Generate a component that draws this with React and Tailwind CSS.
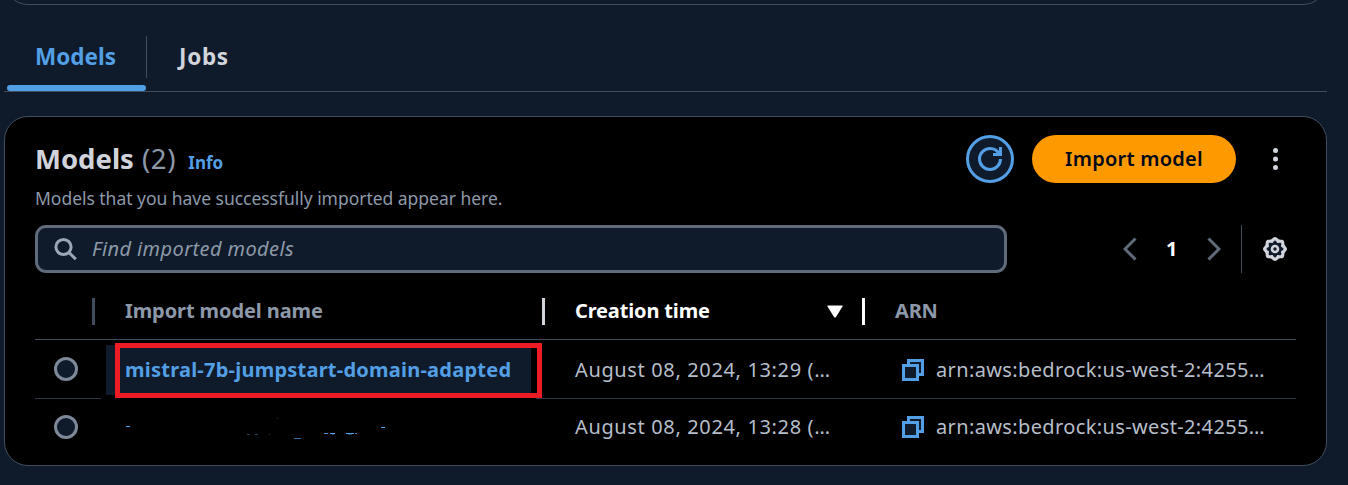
const CopyIcon = () => (
  <svg width="22" height="22" viewBox="0 0 22 22" fill="none" stroke="#539fe5" strokeWidth="3" className="shrink-0">
    <path d="M6.5 5V1.5H20.5V15.5H17" fill="#0f1b2a" />
    <rect x="1.5" y="6.5" width="14" height="14" fill="#0f1b2a" />
  </svg>
);

const Radio = () => (
  <div className="h-6 w-6 shrink-0 rounded-full border-[3px] border-[#7d8998] bg-[#0f1b2a]" />
);

const DateCell = ({ children }) => (
  <div className="w-[319px] shrink-0 pl-[32px] text-[20px] tracking-[0.64px] whitespace-nowrap">{children}</div>
);

const ArnCell = () => (
  <div className="flex items-center gap-[12px] pl-[40px] whitespace-nowrap">
    <CopyIcon />
    <span className="text-[20px] tracking-[0.37px]">arn:aws:bedrock:us-west-2:4255…</span>
  </div>
);

const lobedRing = (radius, depth) =>
  Array.from({ length: 96 }, (_, i) => {
    const a = (i / 96) * Math.PI * 2;
    const r = radius + depth * Math.cos(8 * a);
    return `${(12 + r * Math.cos(a)).toFixed(2)},${(12 + r * Math.sin(a)).toFixed(2)}`;
  }).join(" ");

const maskedNameMarks = [
  [1, 12, 4, 1],
  [122, 20, 3, 0.4],
  [130, 20, 3, 0.4],
  [144, 20, 1, 0.4],
  [152, 4, 1, 0.3],
  [169, 24, 7, 0.7],
  [199, 19, 4, 0.9],
  [205, 19, 5, 1],
  [207, 20, 2, 0.4],
  [221, 19, 8, 1],
  [223, 20, 4, 0.4],
  [230, 19, 2, 0.8],
  [256, 13, 4, 1],
];

export default function App() {
  return (
    <div className="h-[485px] w-[1348px] overflow-hidden bg-[#0f1b2a] pl-[4px] font-['Noto_Sans','Open_Sans',sans-serif] text-[#b6bec9]">
      <div className="h-[5px] w-[1323px] overflow-hidden">
        <div className="-mt-[45px] h-[50px] rounded-[24px] border border-[#414d5c]" />
      </div>

      <div className="mt-[31px] flex h-[56px] w-[1323px] border-b border-[#414d5c]">
        <div className="ml-[3px] flex w-[139px] flex-col justify-between">
          <div className="flex h-[42px] items-center pl-[28px] text-[22.5px] font-bold text-[#539fe5]">Models</div>
          <div className="h-[6px] rounded-[3px] bg-[#539fe5]" />
        </div>
        <div className="h-[42px] w-px bg-[#414d5c]" />
        <div className="flex h-[42px] items-center pl-[32px] text-[22.5px] font-bold tracking-[0.7px] text-[#d1d5db]">Jobs</div>
      </div>

      <div className="mt-[24px] h-[350px] w-[1323px] rounded-[24px] border border-[#414d5c] bg-black pt-[18px] pr-[30px] pl-[30px]">
        <div className="flex h-[48px] items-center">
          <div className="flex items-baseline whitespace-nowrap">
            <span className="text-[27.5px] font-bold text-[#d1d5db]">Models</span>
            <span className="ml-[8px] text-[27.5px] tracking-[0.7px] text-[#8d99a8]">(2)</span>
            <span className="ml-[12px] text-[17px] font-bold text-[#539fe5]">Info</span>
          </div>
          <div className="ml-auto flex h-12 w-12 items-center justify-center rounded-full border-[3px] border-[#539fe5] bg-[#0f1b2a]">
            <svg width="24" height="24" viewBox="0 0 16 16" fill="none" stroke="#539fe5" strokeWidth="2">
              <path d="M15 8c0 3.87-3.13 7-7 7s-7-3.13-7-7 3.13-7 7-7c2.79 0 5.2 1.63 6.33 4" />
              <path d="M10 5h5V0" />
            </svg>
          </div>
          <div className="ml-[18px] flex h-12 w-[204px] items-center justify-center rounded-full bg-[#ff9900] text-[20px] font-semibold tracking-[0.25px] whitespace-nowrap text-[#000716]">Import model</div>
          <svg width="6" height="24" viewBox="0 0 6 24" fill="#d1d5db" className="mr-[17px] ml-[37px]">
            <circle cx="2.5" cy="3.6" r="2.5" />
            <circle cx="2.5" cy="12" r="2.5" />
            <circle cx="2.5" cy="20.4" r="2.5" />
          </svg>
        </div>
        <div className="mt-[2px] h-[27px] text-[17.5px] leading-[26px] tracking-[-0.03px] whitespace-nowrap text-[#8d99a8]">Models that you have successfully imported appear here.</div>

        <div className="mt-[13px] flex h-[48px] items-center">
          <div className="flex h-12 w-[972px] items-center rounded-[11px] border-[3px] border-[#5f6b7a] bg-[#0f1b2a] pl-[16px]">
            <svg width="24" height="24" viewBox="0 0 24 24" fill="none" stroke="#9ba7b6" strokeWidth="3">
              <circle cx="9.5" cy="10" r="7.6" />
              <path d="M14.8 15.3L21.8 22.3" />
            </svg>
            <span className="ml-[14px] text-[20px] tracking-[0.4px] whitespace-nowrap text-[#8d99a8] italic">Find imported models</span>
          </div>
          <svg width="14" height="24" viewBox="0 0 14 24" fill="none" stroke="#5f6b7a" strokeWidth="3" className="ml-[116px]">
            <path d="M12.5 1.5L2 12L12.5 22.5" />
          </svg>
          <span className="ml-[29px] w-[12px] text-[20px] font-bold text-white">1</span>
          <svg width="14" height="24" viewBox="0 0 14 24" fill="none" stroke="#5f6b7a" strokeWidth="3" className="ml-[29px]">
            <path d="M1.5 1.5L12 12L1.5 22.5" />
          </svg>
          <div className="ml-[20px] h-12 w-px bg-[#414d5c]" />
          <svg width="24" height="24" viewBox="0 0 24 24" className="ml-[21px]">
            <polygon points={lobedRing(11.2, 0.8)} fill="#d1d5db" />
            <polygon points={lobedRing(7.5, 1)} fill="#0f1b2a" />
            <circle cx="12" cy="12" r="3" fill="#0f1b2a" stroke="#d1d5db" strokeWidth="2.6" />
          </svg>
        </div>

        <div className="mt-[10px] flex h-[57px] w-[1261px] items-center border-b border-[#414d5c] text-[20px] font-bold whitespace-nowrap text-[#8d99a8]">
          <div className="ml-[57px] h-[27px] w-[3px] bg-[#414d5c]" />
          <div className="w-[447px] pl-[30px] tracking-[-0.09px]">Import model name</div>
          <div className="h-[27px] w-[3px] bg-[#d1d5db]" />
          <div className="flex w-[317px] items-center justify-between pr-[19px] pl-[30px] tracking-[-0.15px] text-white">
            Creation time
            <svg width="16" height="13" viewBox="0 0 16 13" fill="#fff"><path d="M1 .5H15Q16 .5 15.5 1.5L9 12Q8 13 7 12L.5 1.5Q0 .5 1 .5Z" /></svg>
          </div>
          <div className="h-[27px] w-[3px] bg-white" />
          <div className="pl-[30px] tracking-[-0.2px]">ARN</div>
        </div>

        <div className="flex h-[58px] w-[1261px] items-center">
          <div className="flex w-[71px] justify-center pr-[9px]"><Radio /></div>
          <div className="flex items-center pt-[2px]">
            <div className="relative flex h-[50px] w-[437px] shrink-0 items-center">
              <div className="flex h-[50px] w-[425px] items-center bg-[#0f1b2a] pl-[19px] text-[20px] font-bold tracking-[0.24px] whitespace-nowrap text-[#539fe5]">mistral-7b-jumpstart-domain-adapted</div>
              <div className="absolute -top-[2px] left-[9px] h-[55px] w-[427px] border-[5px] border-[#ed1c24]" />
            </div>
            <DateCell>August 08, 2024, 13:29 (…</DateCell>
            <ArnCell />
          </div>
        </div>
        <div className="flex h-px w-[1261px] justify-between">
          <div className="w-[66px] bg-[#2b3340]" />
          <div className="w-[760px] bg-[#2b3340]" />
        </div>

        <div className="flex h-[56px] w-[1261px] items-center">
          <div className="flex w-[71px] justify-center pr-[9px]"><Radio /></div>
          <div className="w-[437px] shrink-0 pl-[19px]">
            <svg width="270" height="26" viewBox="0 0 270 26" fill="#539fe5">
              {maskedNameMarks.map(([x, y, w, o]) => (
                <rect key={`${x}-${y}`} x={x} y={y} width={w} height="1" fillOpacity={o} />
              ))}
            </svg>
          </div>
          <DateCell>August 08, 2024, 13:28 (…</DateCell>
          <ArnCell />
        </div>
      </div>
    </div>
  );
}
